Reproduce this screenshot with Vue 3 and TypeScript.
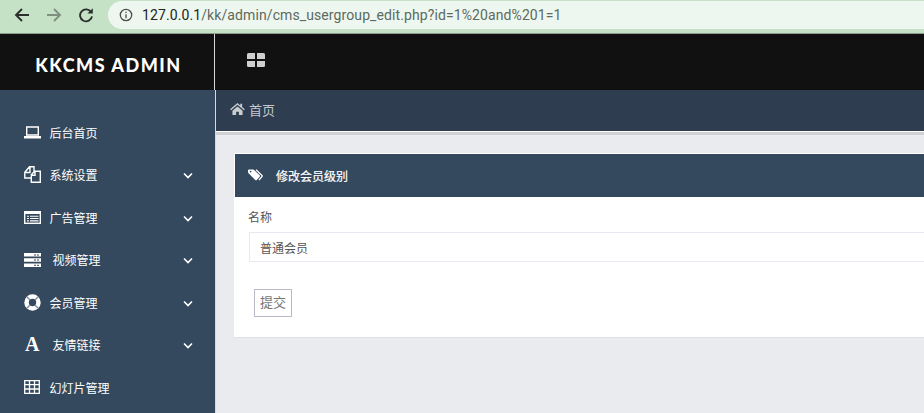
<script setup lang="ts">
interface Item { label: string; icon: string; arrow: boolean; extra?: boolean }
const items: Item[] = [
  { label: '后台首页', icon: 'laptop', arrow: false },
  { label: '系统设置', icon: 'files', arrow: true },
  { label: '广告管理', icon: 'list', arrow: true },
  { label: '视频管理', icon: 'server', arrow: true, extra: true },
  { label: '会员管理', icon: 'ring', arrow: true },
  { label: '友情链接', icon: 'font', arrow: true, extra: true },
  { label: '幻灯片管理', icon: 'table', arrow: false },
]
</script>

<template>
  <div class="page">
    <header class="chrome">
      <svg class="nav-ico" viewBox="0 0 16 16" width="16" height="16"><path d="M15 8H2.5M8 2 2 8l6 6" fill="none" stroke="#2b2f2c" stroke-width="1.9" /></svg>
      <svg class="nav-ico" viewBox="0 0 16 16" width="16" height="16"><path d="M1 8h12.5M8 2l6 6-6 6" fill="none" stroke="#7f9080" stroke-width="1.9" /></svg>
      <svg class="nav-ico" viewBox="0 0 16 16" width="16" height="16"><path d="M13.2 5.2A6 6 0 1 0 14 9.4" fill="none" stroke="#2b2f2c" stroke-width="1.9" /><path d="M9.4 6.6h5.4V1.2z" fill="#2b2f2c" /></svg>
      <div class="url">
        <svg viewBox="0 0 14 14" width="14" height="14"><circle cx="7" cy="7" r="5.7" fill="none" stroke="#4b4f4c" stroke-width="1.3" /><path d="M7 6.2v4M7 3.7v1.3" stroke="#4b4f4c" stroke-width="1.3" /></svg>
        <span class="addr"><b>127.0.0.1</b>/kk/admin/cms_usergroup_edit.php?id=1%20and%201=1</span>
      </div>
    </header>

    <div class="topbar">
      <div class="brand"><span>KKCMS ADMIN</span></div>
      <div class="toggle">
        <svg viewBox="0 0 18 14" width="18" height="14"><path d="M0 1.5Q0 0 1.5 0H8v6H0zM10 0h6.5Q18 0 18 1.5V6h-8zM0 8h8v6H1.5Q0 14 0 12.500zM10 8h8v4.500Q18 14 16.500 14H10z" fill="#cfcfcf" /></svg>
      </div>
    </div>

    <div class="main">
      <nav class="sidebar">
        <a v-for="it in items" :key="it.label" class="item">
          <span class="ico">
            <svg v-if="it.icon === 'laptop'" viewBox="0 0 17 13" width="17" height="13"><path d="M2.700 1h11.600v8H2.700z" fill="none" stroke="#fff" stroke-width="1.400" /><path d="M0 10h17v2.500H0z" fill="#fff" /></svg>
            <svg v-else-if="it.icon === 'files'" viewBox="0 0 17 17" width="17" height="17"><path d="M7 12H.8V6.200L5.500.8H10V5M1 6.500h5V1" fill="none" stroke="#fff" stroke-width="1.400" /><path d="M10.500 5.300h5.800v11H7.300v-7.500zM7.500 9.200H11V5.500" fill="none" stroke="#fff" stroke-width="1.400" /></svg>
            <svg v-else-if="it.icon === 'list'" viewBox="0 0 17 13" width="17" height="13"><rect x=".7" y=".7" width="15.600" height="11.600" fill="none" stroke="#fff" stroke-width="1.400" /><path d="M1 1h15v2H1zM3 4.700h2v1.100H3zM6 4.700h8.500v1.100H6zM3 7h2v1.100H3zM6 7h8.500v1.100H6zM3 9.300h2v1.100H3zM6 9.300h8.500v1.100H6z" fill="#fff" /></svg>
            <svg v-else-if="it.icon === 'server'" viewBox="0 0 17 14" width="17" height="14"><path d="M0 0h17v3.500H0zM0 5.200h17v3.500H0zM0 10.400h17v3.500H0z" fill="#fff" /><path d="M10 1.500h2v1h-2zM13 1.500h2v1h-2zM10 6.500h2v1h-2zM13 6.500h2v1h-2zM10 11.700h2v1h-2zM13 11.700h2v1h-2z" fill="#34495e" /></svg>
            <svg v-else-if="it.icon === 'ring'" viewBox="0 0 17 17" width="17" height="17"><circle cx="8.500" cy="8.500" r="8.200" fill="#fff" /><circle cx="8.500" cy="8.500" r="3.700" fill="#34495e" /><path d="m2.800 2.800 3 3M14.200 2.800l-3 3M2.800 14.200l3-3M14.200 14.200l-3-3" stroke="#7f90a2" stroke-width="1.400" /></svg>
            <span v-else-if="it.icon === 'font'" class="serif-a">A</span>
            <svg v-else viewBox="0 0 16 14" width="16" height="14"><path d="M.7.700h14.600v12.600H.7zM1 4.700h14M1 9h14M5.500 1v12M10.500 1v12" fill="none" stroke="#fff" stroke-width="1.300" /></svg>
          </span>
          <span class="label" :class="{ shifted: it.extra }">{{ it.label }}</span>
          <svg v-if="it.arrow" class="arrow" viewBox="0 0 10 7" width="10" height="7"><path d="m1 1.500 4 4 4-4" fill="none" stroke="#fff" stroke-width="1.600" /></svg>
        </a>
      </nav>

      <div class="content">
        <div class="crumb">
          <svg viewBox="0 0 16 13" width="15" height="12"><path d="M8 0 0 6.800l1 1L8 2l7 5.800 1-1-3-2.500V.800h-2v1.800zM2.500 8.500 8 3.800l5.500 4.700V13H9.500V9.500h-3V13h-4z" fill="#c9cdd1" /></svg>
          <span>首页</span>
        </div>
        <section class="panel">
          <h2 class="panel-head">
            <svg viewBox="0 0 15 12" width="15" height="12"><path d="M0 1.500Q0 .500 1 .500h4.500l6 5.500q1 1 0 2L9 10.800q-1 1-2 0L.8 4.500Q0 3.700 0 3z" fill="#fff" /><path d="M8 .8 14 6.500Q14.500 7 14 7.500L11 11" fill="none" stroke="#fff" stroke-width="1.200" /><circle cx="2.600" cy="2.600" r=".9" fill="#34495e" /></svg>
            <span>修改会员级别</span>
          </h2>
          <form class="panel-body" @submit.prevent>
            <label class="field-label" for="name">名称</label>
            <input id="name" class="field" value="普通会员" />
            <button class="submit" type="submit">提交</button>
          </form>
        </section>
      </div>
    </div>
  </div>
</template>

<style>
html, body { margin: 0; overflow: hidden; }
</style>

<style scoped>
.page {
  width: 924px;
  height: 413px;
  overflow: hidden;
  display: flex;
  flex-direction: column;
  font-family: "Liberation Sans", "Noto Sans CJK SC", sans-serif;
  background: #e9ebef;
}
.chrome {
  height: 34px;
  flex: none;
  box-sizing: border-box;
  border-bottom: 1px solid #8aa08c;
  background: #c5e2c6;
  display: flex;
  align-items: center;
  padding: 0 0 3px 14px;
  gap: 16px;
}
.nav-ico { flex: none; }
.url {
  flex: 1;
  margin-left: -2px;
  height: 28px;
  border-radius: 14px 0 0 14px;
  background: #eef7ef;
  display: flex;
  align-items: center;
  gap: 9px;
  padding-left: 11px;
}
.addr { font: 14px "Roboto", "Liberation Sans", sans-serif; color: #5c6a60; letter-spacing: .1px; }
.addr b { font-weight: 400; color: #202422; }
.topbar { height: 56px; flex: none; background: #111; display: flex; }
.brand {
  width: 215px;
  box-sizing: border-box;
  border-right: 1px solid #d5d8dc;
  display: flex;
  align-items: center;
  justify-content: center;
  padding: 6px 0 0 3px;
  font: 900 18px "Lato", sans-serif;
  color: #fff;
  letter-spacing: 1.500px;
}
.toggle { padding: 19px 0 0 32px; }
.toggle svg { display: block; }
.main { flex: 1; display: flex; min-height: 0; }
.sidebar {
  width: 215px;
  flex: none;
  box-sizing: border-box;
  background: #34495e;
  padding-top: 20.800px;
}
.item {
  height: 42.500px;
  display: flex;
  align-items: center;
  padding-left: 24px;
  color: #fff;
  font-size: 12px;
  position: relative;
}
.ico { width: 25.500px; flex: none; display: flex; align-items: center; }
.ico svg { display: block; }
.serif-a { font: bold 20px "Liberation Serif", serif; color: #fff; margin-left: 1px; }
.label.shifted { margin-left: 3px; }
.arrow { position: absolute; left: 183px; top: 19px; }
.content { flex: 1; min-width: 0; border-left: 1px solid #d5d8dc; }
.crumb {
  height: 41px;
  box-sizing: border-box;
  background: #2e3e50;
  display: flex;
  align-items: center;
  gap: 4px;
  padding: 0 0 3px 14px;
  color: #c4c8cc;
  font-size: 13px;
  box-shadow: 0 1px 0 #fff, 0 4px 0 #d0d2d6;
}
.panel {
  margin: 22px -30px 0 18px;
  padding-top: 1px;
  background: #fff;
  border-bottom: 1px solid #dde0e4;
}
.panel-head {
  margin: 0 0 0 1px;
  height: 43px;
  box-sizing: border-box;
  background: #34495e;
  display: flex;
  align-items: center;
  gap: 13px;
  padding: 0 0 1px 13px;
  color: #fff;
  font-size: 12px;
  font-weight: 400;
  -webkit-text-stroke: .2px #fff;
}
.panel-body { display: block; padding: 13px 0 0 15px; height: 140px; box-sizing: border-box; }
.field-label { display: block; margin-left: -1px; font-size: 12px; color: #555; line-height: 16px; }
.field {
  display: block;
  box-sizing: border-box;
  width: 100%;
  height: 30px;
  margin-top: 6px;
  border: 1px solid #e6e9f4;
  padding: 0 10px;
  outline: none;
  font: 12px "Liberation Sans", "Noto Sans CJK SC", sans-serif;
  color: #555;
  background: #fff;
}
.submit {
  display: block;
  margin: 27px 0 0 5px;
  width: 38px;
  height: 28px;
  box-sizing: border-box;
  border: 1px solid #b9b9c9;
  background: #fff;
  padding: 0 0 3px;
  font: 13px "Liberation Sans", "Noto Sans CJK SC", sans-serif;
  color: #777;
}
</style>
